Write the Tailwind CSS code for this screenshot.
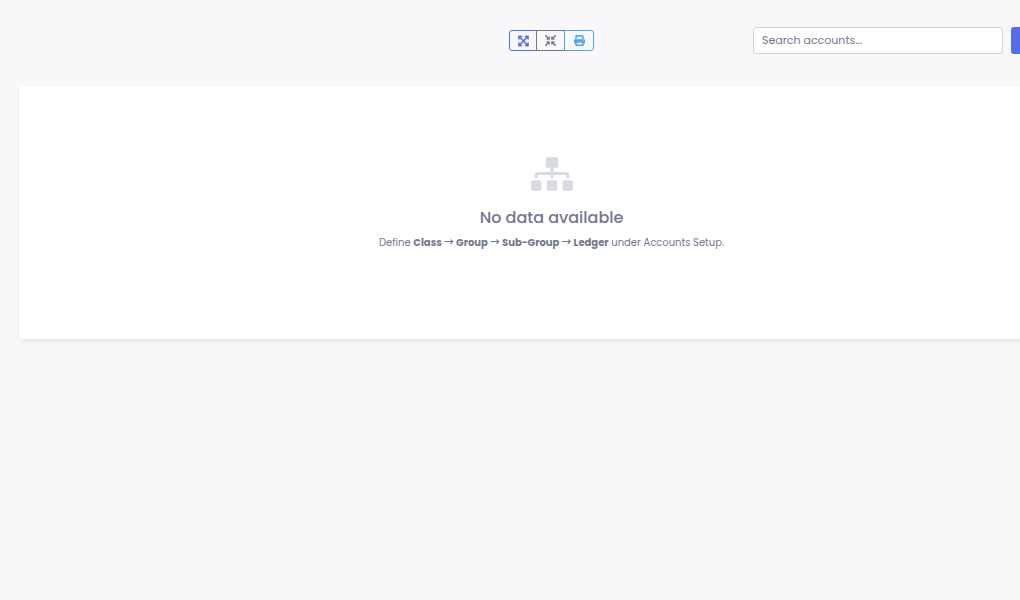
<!DOCTYPE html>
<html lang="en">
<head>
    <meta charset="UTF-8">
    <meta name="viewport" content="width=device-width, initial-scale=1.0">
    <title>Chart of Accounts</title>
    <script src="https://cdn.jsdelivr.net/npm/@tailwindcss/browser@4"></script>
</head>
<body class="bg-[#f8f8fb] min-h-screen overflow-x-hidden font-[Poppins,'Noto_Sans_CJK_SC',sans-serif] text-[#74788d]">
    <main class="w-[calc(100%+64px)] pl-[19px] pt-[27px]">
        <!-- Toolbar -->
        <div class="grid grid-cols-3 items-center mb-8">
            <div class="col-start-2 flex justify-center">
                <button type="button" id="expandAll" aria-label="Expand all" class="flex h-[21px] w-7 items-center justify-center rounded-l-[3px] border border-[#556ee6] text-[#556ee6]">
                    <svg class="h-3 w-[11px]" viewBox="0 0 448 512" fill="currentColor" stroke="currentColor" stroke-width="12"><path d="M448 344v112a23.94 23.94 0 0 1-24 24H312c-21.39 0-32.09-25.9-17-41l36.2-36.2L224 295.6 116.77 402.9 153 439c15.09 15.1 4.39 41-17 41H24a23.94 23.94 0 0 1-24-24V344c0-21.4 25.89-32.1 41-17l36.19 36.2L184.46 256 77.18 148.7 41 185c-15.1 15.1-41 4.4-41-17V56a23.94 23.94 0 0 1 24-24h112c21.39 0 32.09 25.9 17 41l-36.2 36.2L224 216.4l107.23-107.3L295 73c-15.09-15.1-4.39-41 17-41h112a23.94 23.94 0 0 1 24 24v112c0 21.4-25.89 32.1-41 17l-36.19-36.2L263.54 256l107.28 107.3L407 327.1c15.1-15.2 41-4.5 41 16.9z"/></svg>
                </button>
                <button type="button" id="collapseAll" aria-label="Collapse all" class="-ml-px flex h-[21px] w-[29px] items-center justify-center border border-[#74788d] text-[#74788d]">
                    <svg class="h-[11px] w-[11px]" viewBox="0 0 512 512" fill="currentColor"><path d="M200 288H88c-21.4 0-32.1 25.8-17 41l32.9 31-99.2 99.3c-6.2 6.2-6.2 16.4 0 22.6l25.4 25.4c6.2 6.2 16.4 6.2 22.6 0L152 408l31.1 33c15.1 15.1 40.9 4.4 40.9-17V312c0-13.3-10.7-24-24-24zm112-64h112c21.4 0 32.1-25.9 17-41l-33-31 99.3-99.3c6.2-6.2 6.2-16.4 0-22.6L481.9 4.7c-6.2-6.2-16.4-6.2-22.6 0L360 104l-31.1-33C313.8 55.9 288 66.6 288 88v112c0 13.3 10.7 24 24 24zm96 136l33-31.1c15.1-15.1 4.4-40.9-17-40.9H312c-13.3 0-24 10.7-24 24v112c0 21.4 25.9 32.1 41 17l31-32.9 99.3 99.3c6.2 6.2 16.4 6.2 22.6 0l25.4-25.4c6.2-6.2 6.2-16.4 0-22.6L408 360zM183 71.1L152 104 52.7 4.7c-6.2-6.2-16.4-6.2-22.6 0L4.7 30.1c-6.2 6.2-6.2 16.4 0 22.6L104 152l-33 31.1C55.9 198.2 66.6 224 88 224h112c13.3 0 24-10.7 24-24V88c0-21.3-25.9-32-41-16.9z"/></svg>
                </button>
                <button type="button" id="print" aria-label="Print" class="-ml-px flex h-[21px] w-[30px] items-center justify-center rounded-r-[3px] border border-[#50a5f1] text-[#50a5f1]">
                    <svg class="h-[11px] w-[11px]" viewBox="0 0 512 512" fill="currentColor" stroke="currentColor" stroke-width="16"><path d="M128 0C92.7 0 64 28.7 64 64v96h64V64H354.7L384 93.3V160h64V93.3c0-17-6.7-33.3-18.7-45.3L400 18.7C388 6.7 371.7 0 354.7 0H128zM384 352v96H128V352H384zm64 32h32c17.7 0 32-14.3 32-32V256c0-35.3-28.7-64-64-64H64c-35.3 0-64 28.7-64 64v96c0 17.7 14.3 32 32 32H64v64c0 35.3 28.7 64 64 64H384c35.3 0 64-28.7 64-64V384zM432 248a24 24 0 1 1 0 48 24 24 0 1 1 0-48z"/></svg>
                </button>
            </div>
            <form class="flex justify-end gap-2">
                <input type="search" id="search" aria-label="Search accounts" placeholder="Search accounts..." class="h-[27px] w-[250px] rounded-[3px] border border-[#ced4da] bg-white px-2 pb-px text-[11px] placeholder:text-[#74788d]">
                <button type="submit" aria-label="Search" class="h-[27px] w-[73px] rounded-[3px] bg-[#556ee6]"></button>
            </form>
        </div>

        <!-- Empty state -->
        <div class="flex flex-col items-center rounded-[3px] bg-white pt-[71px] pb-[88px] text-center shadow-[0_2px_4px_rgba(0,0,0,0.075)]">
            <svg class="mb-[15px] h-[34px] w-[42px] text-[#d9dbe2]" viewBox="0 0 640 512" fill="currentColor"><path d="M128 352H32c-17.67 0-32 14.33-32 32v96c0 17.67 14.33 32 32 32h96c17.67 0 32-14.33 32-32v-96c0-17.67-14.33-32-32-32zm-24-80h192v48h48v-48h192v48h48v-57.59c0-21.17-17.23-38.41-38.41-38.41H344v-64h40c17.67 0 32-14.33 32-32V32c0-17.67-14.33-32-32-32H256c-17.67 0-32 14.33-32 32v96c0 17.67 14.33 32 32 32h40v64H94.41C73.23 224 56 241.23 56 262.41V320h48v-48zm264 80h-96c-17.67 0-32 14.33-32 32v96c0 17.67 14.33 32 32 32h96c17.67 0 32-14.33 32-32v-96c0-17.67-14.33-32-32-32zm240 0h-96c-17.67 0-32 14.33-32 32v96c0 17.67 14.33 32 32 32h96c17.67 0 32-14.33 32-32v-96c0-17.67-14.33-32-32-32z"/></svg>
            <h5 class="mb-[5px] text-[16px] leading-6 font-medium">No data available</h5>
            <p class="text-[10px] leading-4">Define <strong>Class → Group → Sub-Group → Ledger</strong> under Accounts Setup.</p>
        </div>
    </main>
</body>
</html>
